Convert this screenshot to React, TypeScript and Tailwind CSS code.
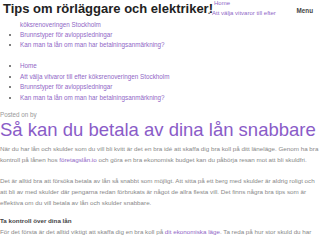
import React from "react";

export default function App() {
  const link = "text-[#9067c6]";
  return (
    <div className="w-[320px] h-[240px] overflow-hidden bg-white font-['Liberation_Sans',Arial,sans-serif] text-[#777]">
      <div className="flex items-start h-[20px]">
        <h1 className="pl-[3px] pt-[1px] text-[13px] leading-[16px] font-bold text-[#222] whitespace-nowrap">
          Tips om rörläggare och elektriker!
        </h1>
        <div className="ml-[1px] text-[6px] leading-[7px] whitespace-nowrap">
          <div className={link}>Home</div>
          <div className="flex items-center gap-[2px] mt-[3px] -ml-[6px]">
            <span className="text-[#555]">•</span>
            <span className={link}>Att välja vitvaror till efter</span>
          </div>
        </div>
        <div className="ml-auto mr-[7px] mt-[6px] text-[6.3px] font-bold text-[#444]">Menu</div>
      </div>
      <div className="text-[6.3px] leading-[10px]">
        <div className={`pl-[20px] ${link}`}>köksrenoveringen Stockholm</div>
        <ul className="list-disc pl-[20px] marker:text-[#555]">
          <li className={link}>Brunnstyper för avloppsledningar</li>
          <li className={link}>Kan man ta lån om man har betalningsanmärkning?</li>
        </ul>
      </div>
      <ul className="mt-[11px] list-disc pl-[20px] marker:text-[#555] text-[6.3px] leading-[10.5px]">
        <li className={link}>Home</li>
        <li className={link}>Att välja vitvaror till efter köksrenoveringen Stockholm</li>
        <li className={link}>Brunnstyper för avloppsledningar</li>
        <li className={link}>Kan man ta lån om man har betalningsanmärkning?</li>
      </ul>
      <div className="mt-[8px] text-[6.3px] leading-[8px] text-[#999]">Posted on by</div>
      <h2 className="text-[18.5px] leading-[22px] text-[#8a5cc8]">Så kan du betala av dina lån snabbare</h2>
      <div className="mt-[2px] text-[6.24px] leading-[11px] text-[#888]">
        <p>
          När du har lån och skulder som du vill bli kvitt är det en bra idé att skaffa dig bra koll på ditt läneläge. Genom ha bra kontroll på lånen hos <span className={link}>företagslån.io</span> och göra en bra ekonomisk budget kan du påbörja resan mot att bli skuldfri.
        </p>
        <p className="mt-[10px]">
          Det är alltid bra att försöka betala av lån så snabbt som möjligt. Att sitta på ett berg med skulder är aldrig roligt och att bli av med skulder där pengarna redan förbrukats är något de allra flesta vill. Det finns några bra tips som är effektiva om du vill betala av lån och skulder snabbare.
        </p>
        <p className="mt-[7px] font-bold text-[#444]">Ta kontroll över dina lån</p>
        <p>
          För det första är det alltid viktigt att skaffa dig en bra koll på <span className={link}>dit ekonomiska läge</span>. Ta reda på hur stor skuld du har
        </p>
      </div>
    </div>
  );
}
